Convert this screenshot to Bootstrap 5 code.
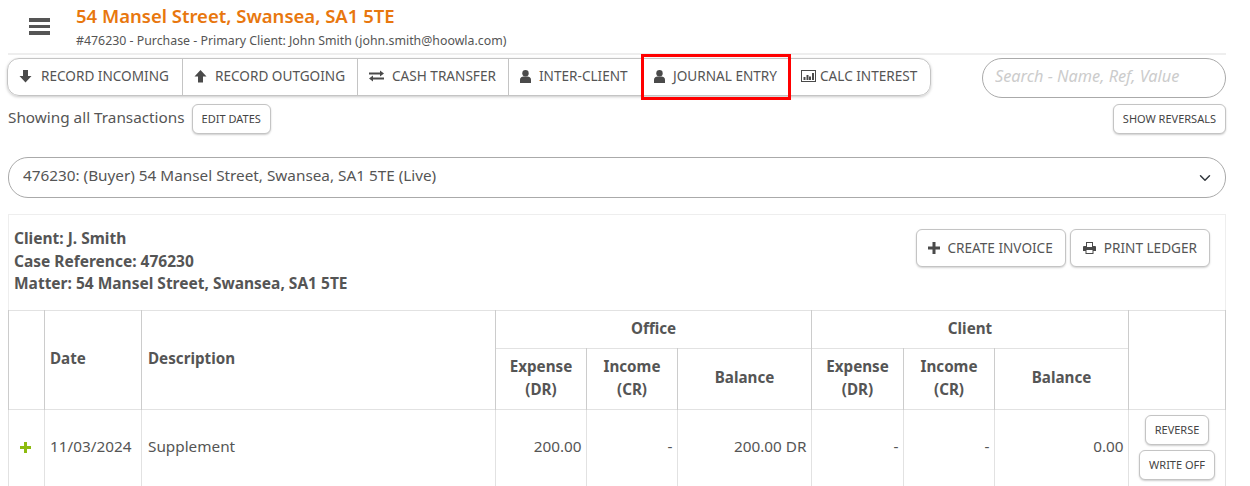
<!DOCTYPE html>
<html lang="en">
<head>
<meta charset="utf-8">
<title>Ledger</title>
<link href="https://cdn.jsdelivr.net/npm/bootstrap@5.3.0/dist/css/bootstrap.min.css" rel="stylesheet">
<style>
html,body{height:486px;overflow:hidden;background:#fff}
body{font-family:"Noto Sans","Open Sans","Liberation Sans",sans-serif;color:#555;font-size:15.3px}
.shell{width:1218px;margin-left:8px}
.topbar{height:55px;border-bottom:2px solid #eee}
.burger{width:21px;margin:18px 26px 0 21px;flex:none}
.burger i{display:block;height:3.5px;background:#555;margin-bottom:3px}
.case-title{font-size:18.5px;font-weight:600;color:#e8770e;line-height:24px;margin-top:4px}
.case-sub{font-size:12.35px;line-height:16px;margin-top:5px;color:#555}
.toolrow{margin-top:3px;height:41px}
.tool-btn{font-size:13.6px;color:#555;background:#fff;border:1px solid #c4c4c4;height:38px;line-height:1;padding:0 0 2px 11px;display:inline-flex;align-items:center;gap:8px;white-space:nowrap}
.tool-set{margin-left:-1px;height:38px;border-radius:12px;box-shadow:0 1px 3px rgba(0,0,0,.22)}
.tool-set .tool-btn{border-radius:0;flex:none}
.tool-set .tool-btn+.tool-btn{margin-left:-1px}
.tool-set .tool-btn:first-child{border-radius:12px 0 0 12px;gap:9px}
.tool-set .tool-btn:last-child{border-radius:0 12px 12px 0;gap:4px;padding-left:10px}
.tw-a{width:176px}.tw-b{width:176px}.tw-c{width:152px}.tw-d{width:135px}.tw-e{width:149px}.tw-f{width:141px}
.tool-btn svg{flex:none;fill:#4a4a4a}
.hl-wrap{position:relative}
.hl-box{position:absolute;left:633px;top:-4px;width:150px;height:46px;border:3px solid #f00;pointer-events:none}
.search-box{width:244px;height:40px;border-radius:20px;border:1px solid #aaa;font-size:16.3px;font-style:italic;padding:0 12px 4px;box-shadow:none}
.search-box::placeholder{color:#ccc}
.filter-row{height:40px;margin-top:5px}
.filter-text{font-size:15.3px;line-height:20px;margin-top:3px;margin-right:-1px}
.mini-btn{font-size:11px;color:#444;background:#fff;border:1px solid #c4c4c4;border-radius:6px;padding:0 9px;height:30px;display:inline-flex;align-items:center;box-shadow:0 1px 2px rgba(0,0,0,.2);white-space:nowrap}
.matter-select{margin-top:13px;height:41px;border-radius:20px;border-color:#aaa;font-size:15.3px;color:#555;padding:0 36px 4px 14px}
.ledger-box{margin-top:16px;border:1px solid #eee;border-bottom:0}
.ledger-head{height:95px;padding:12px 15px 0 5px}
.ledger-info{font-size:15.5px;font-weight:700;line-height:22.5px}
.ledger-btn{border-radius:6px;height:38px;margin-top:2px;box-shadow:0 1px 2px rgba(0,0,0,.18);padding:0 12px 1px}
.ledger-btn.inv{padding-left:11px;gap:7px}
.ledger-table{table-layout:fixed;width:1218px;margin:0 0 0 -1px;color:#555;font-size:15.3px;border-color:#e2e2e2}
.ledger-table>:not(caption)>*>*{padding:0 6px;border-color:#e2e2e2;color:#555}
.ledger-table thead th{font-weight:700;font-size:15.2px;text-align:center;vertical-align:middle;line-height:23px;border-color:#ccc;padding-bottom:3px}
.ledger-table thead th.lft{text-align:left}
.ledger-table thead th.date-h,.ledger-table tbody td.date-c{padding-left:5px}
.ledger-table tbody td{vertical-align:middle;padding-bottom:10px}
.rowa{height:38px}.rowb{height:61px}.rowc{height:84px}
.ledger-table .num{text-align:right;padding-right:4.500px}
.ledger-table .act-cell{text-align:center;padding:5px 0 0;vertical-align:top}
.act-cell .mini-btn{margin-bottom:5px}
.plus-ic{fill:#8dbb0f;margin-left:-2px}
.ledger-table tbody{border-top:1px solid #ccc}
.ledger-table .strong-l{border-left-color:#ccc}
</style>
</head>
<body>
<div class="shell">
  <div class="topbar d-flex">
    <div class="burger"><i></i><i></i><i></i></div>
    <div>
      <div class="case-title">54 Mansel Street, Swansea, SA1 5TE</div>
      <div class="case-sub">#476230 - Purchase - Primary Client: John Smith (john.smith@hoowla.com)</div>
    </div>
  </div>
  <div class="toolrow hl-wrap d-flex justify-content-between">
    <div class="btn-group align-self-start tool-set" role="group">
      <button class="tool-btn tw-a" type="button"><svg width="13" height="13" viewBox="0 0 13 13"><path d="M4 0h5v6h3.500L6.500 12.500.5 6H4z"/></svg>RECORD INCOMING</button>
      <button class="tool-btn tw-b" type="button"><svg width="13" height="13" viewBox="0 0 13 13"><path d="M4 12.500h5v-6h3.500L6.500 0 .5 6.500H4z"/></svg>RECORD OUTGOING</button>
      <button class="tool-btn tw-c" type="button"><svg width="15" height="12" viewBox="0 0 15 12"><path d="M0 2.500h11V.5l4 3-4 3V4.500H0zM15 7.500H4v-2l-4 3 4 3v-2h11z"/></svg>CASH TRANSFER</button>
      <button class="tool-btn tw-d" type="button"><svg width="11" height="13" viewBox="0 0 11 13"><circle cx="5.500" cy="3.300" r="3.200"/><path d="M0 13V9.500C0 7.500 2 6.500 3.500 6.500h4C9 6.500 11 7.500 11 9.500V13z"/></svg>INTER-CLIENT</button>
      <button class="tool-btn tw-e" type="button"><svg width="11" height="13" viewBox="0 0 11 13"><circle cx="5.500" cy="3.300" r="3.200"/><path d="M0 13V9.500C0 7.500 2 6.500 3.500 6.500h4C9 6.500 11 7.500 11 9.500V13z"/></svg>JOURNAL ENTRY</button>
      <button class="tool-btn tw-f" type="button"><svg width="15" height="12" viewBox="0 0 15 12"><path d="M0 0h15v12H0zM1 1v10h13V1zM2.500 7h2v3h-2zM5.500 5h2v5h-2zM8 6.500h2V10H8zM11 3h2v7h-2z" fill-rule="evenodd"/></svg>CALC INTEREST</button>
    </div>
    <input class="form-control search-box" type="text" placeholder="Search - Name, Ref, Value">
    <div class="hl-box"></div>
  </div>
  <div class="filter-row d-flex justify-content-between">
    <div class="d-flex gap-2 align-items-start">
      <div class="filter-text">Showing all Transactions</div>
      <button class="mini-btn" type="button">EDIT DATES</button>
    </div>
    <button class="mini-btn align-self-start" type="button">SHOW REVERSALS</button>
  </div>
  <select class="form-select matter-select"><option>476230: (Buyer) 54 Mansel Street, Swansea, SA1 5TE (Live)</option></select>
  <div class="ledger-box">
    <div class="ledger-head d-flex justify-content-between">
      <div class="ledger-info">Client: J. Smith<br>Case Reference: 476230<br>Matter: 54 Mansel Street, Swansea, SA1 5TE</div>
      <div class="d-flex gap-1 align-items-start">
        <button class="tool-btn ledger-btn inv" type="button"><svg width="12" height="12" viewBox="0 0 12 12"><path d="M4.500 0h3v4.500H12v3H7.500V12h-3V7.500H0v-3h4.500z"/></svg>CREATE INVOICE</button>
        <button class="tool-btn ledger-btn" type="button"><svg width="13" height="12" viewBox="0 0 13 12"><path d="M3 0h7v4h2a1 1 0 0 1 1 1v4h-2.500v3h-8V9H0V5a1 1 0 0 1 1-1h2zM4 1v4h5V1zM3.500 8v3h6V8z" fill-rule="evenodd"/></svg>PRINT LEDGER</button>
      </div>
    </div>
    <table class="table table-bordered ledger-table">
      <colgroup><col style="width:36px"><col style="width:97px"><col style="width:354px"><col style="width:91px"><col style="width:91px"><col style="width:134px"><col style="width:92px"><col style="width:91px"><col style="width:134px"><col></colgroup>
      <thead>
        <tr class="rowa">
          <th rowspan="2"></th>
          <th rowspan="2" class="lft date-h">Date</th>
          <th rowspan="2" class="lft">Description</th>
          <th colspan="3">Office</th>
          <th colspan="3">Client</th>
          <th rowspan="2"></th>
        </tr>
        <tr class="rowb">
          <th>Expense<br>(DR)</th><th>Income<br>(CR)</th><th>Balance</th>
          <th>Expense<br>(DR)</th><th>Income<br>(CR)</th><th>Balance</th>
        </tr>
      </thead>
      <tbody>
        <tr class="rowc">
          <td class="text-center"><svg class="plus-ic" width="11" height="11" viewBox="0 0 11 11"><path d="M4 0h3v4h4v3H7v4H4V7H0V4h4z"/></svg></td>
          <td class="date-c">11/03/2024</td>
          <td>Supplement</td>
          <td class="num strong-l">200.00</td>
          <td class="num">-</td>
          <td class="num">200.00 DR</td>
          <td class="num strong-l">-</td>
          <td class="num">-</td>
          <td class="num">0.00</td>
          <td class="act-cell strong-l"><button class="mini-btn" type="button">REVERSE</button><button class="mini-btn" type="button">WRITE OFF</button></td>
        </tr>
      </tbody>
    </table>
  </div>
</div>
</body>
</html>
